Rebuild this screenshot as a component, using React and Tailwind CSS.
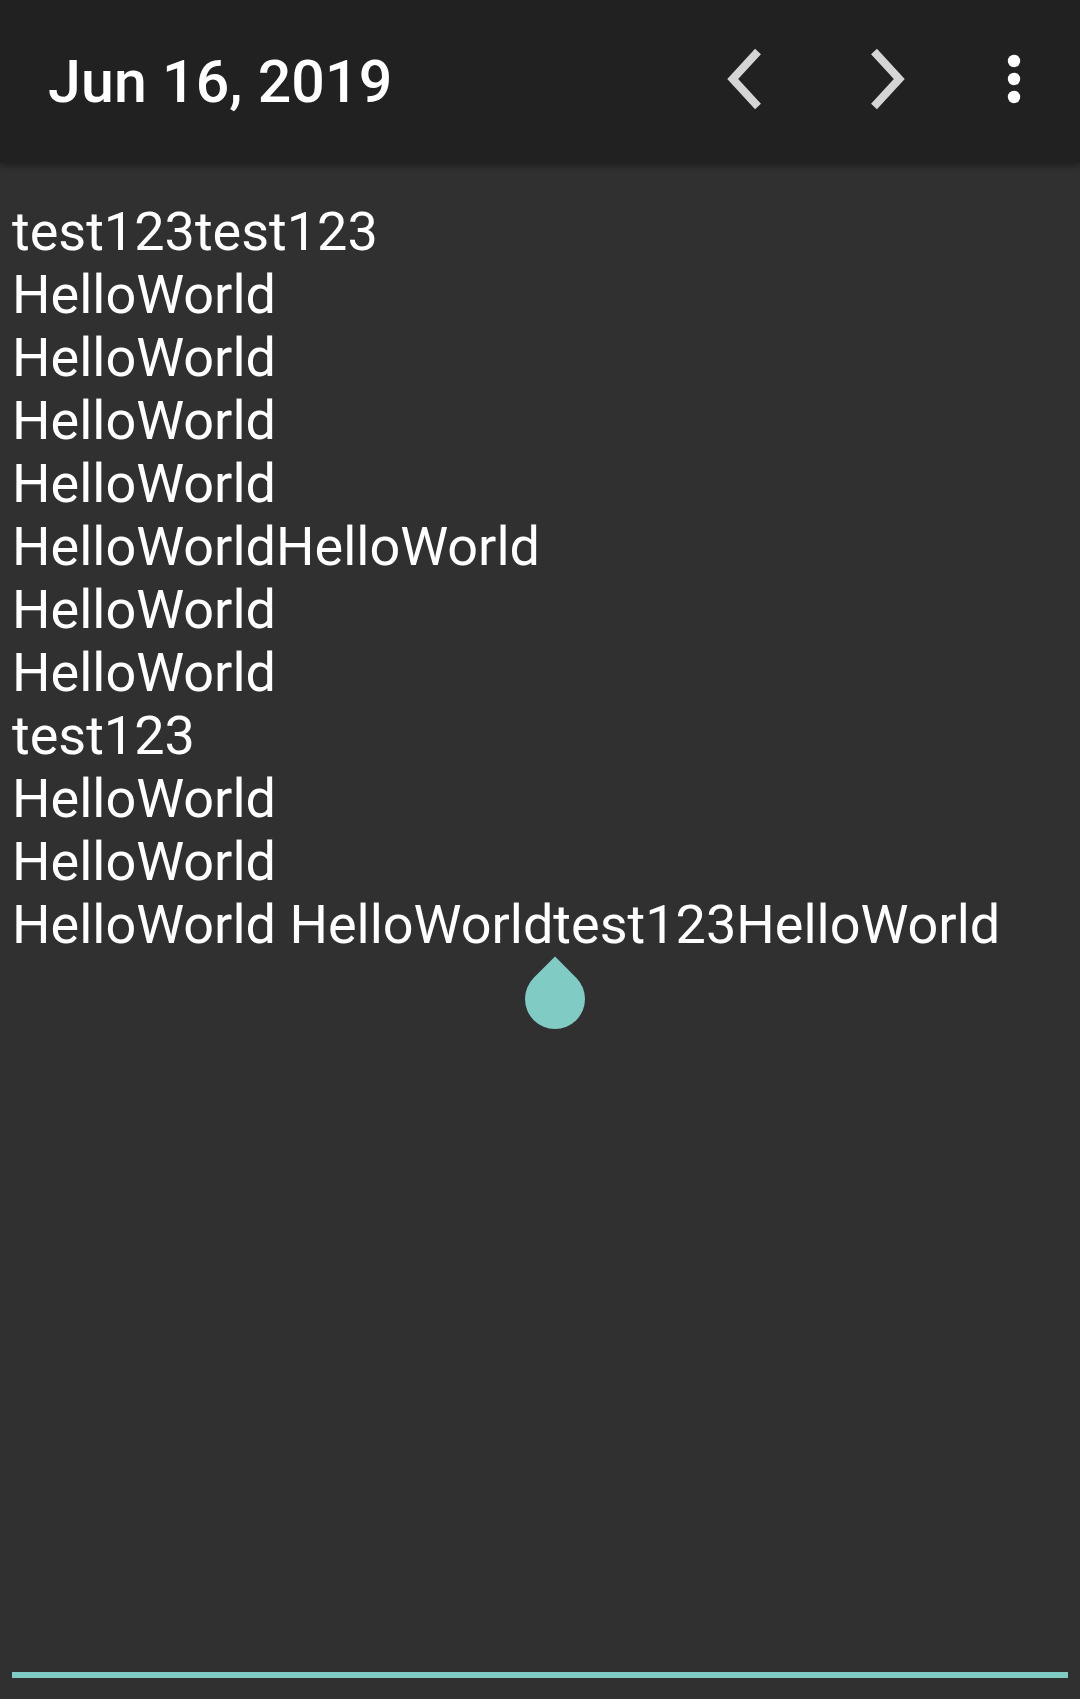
import React from 'react';

const lines = [
  'test123test123',
  'HelloWorld',
  'HelloWorld',
  'HelloWorld',
  'HelloWorld',
  'HelloWorldHelloWorld',
  'HelloWorld',
  'HelloWorld',
  'test123',
  'HelloWorld',
  'HelloWorld',
  'HelloWorld HelloWorldtest123HelloWorld',
];

export default function App() {
  return (
    <div className="min-h-[1699px] w-[1080px] flex flex-col bg-[#303030] text-white" style={{ fontFamily: 'Roboto, "Noto Sans", sans-serif' }}>
      {/* Toolbar */}
      <div className="relative z-10 h-[163px] flex items-center bg-[#212121] shadow-[0_3px_6px_rgba(0,0,0,0.35)]">
        <h1 className="flex-1 pl-[48px] text-[59px] font-medium leading-[70px] tracking-[0.2px]">Jun 16, 2019</h1>
        <svg width="80" height="163" viewBox="0 0 80 163" className="shrink-0">
          <polyline points="58,51.5 32.7,79 58,106.5" fill="none" stroke="#d5d5d5" strokeWidth="8" strokeLinejoin="miter" />
        </svg>
        <svg width="80" height="163" viewBox="0 0 80 163" className="shrink-0 ml-[60px]">
          <polyline points="34,51.5 59.3,79 34,106.5" fill="none" stroke="#d5d5d5" strokeWidth="8" strokeLinejoin="miter" />
        </svg>
        <svg width="58" height="163" viewBox="0 0 58 163" className="shrink-0 ml-[65px] mr-[37px]">
          <circle cx="29" cy="61" r="6.2" fill="#fff" />
          <circle cx="29" cy="79" r="6.2" fill="#fff" />
          <circle cx="29" cy="97" r="6.2" fill="#fff" />
        </svg>
      </div>

      {/* Editor */}
      <div className="flex-1 flex flex-col">
        <div className="pt-[37px] pl-[12px] text-[54px] leading-[63px] whitespace-nowrap">
          {lines.map((l, i) => (
            <div key={i}>{l}</div>
          ))}
        </div>
        <div className="relative h-0">
          {/* cursor handle */}
          <div className="absolute left-[525px] top-[13px] w-[60px] h-[60px] rounded-full rounded-tl-none bg-[#80cbc4] rotate-45" />
        </div>
        <div className="mt-auto mx-[12px] mb-[21px] h-[6px] bg-[#80cbc4]" />
      </div>
    </div>
  );
}
